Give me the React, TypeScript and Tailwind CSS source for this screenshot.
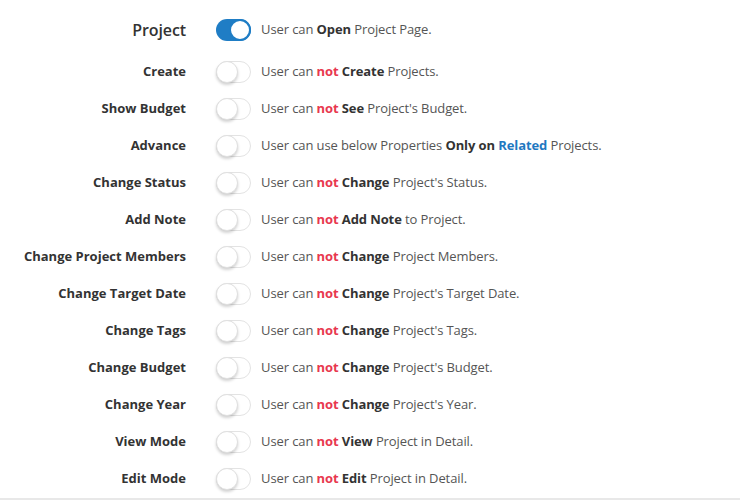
import React from "react";

type Part = { t: string; k?: "b" | "r" | "l" };
type Row = { label: string; on?: boolean; parts: Part[] };

const rows: Row[] = [
  { label: "Create", parts: [{ t: "User can " }, { t: "not", k: "r" }, { t: " " }, { t: "Create", k: "b" }, { t: " Projects." }] },
  { label: "Show Budget", parts: [{ t: "User can " }, { t: "not", k: "r" }, { t: " " }, { t: "See", k: "b" }, { t: " Project's Budget." }] },
  { label: "Advance", parts: [{ t: "User can use below Properties " }, { t: "Only on", k: "b" }, { t: " " }, { t: "Related", k: "l" }, { t: " Projects." }] },
  { label: "Change Status", parts: [{ t: "User can " }, { t: "not", k: "r" }, { t: " " }, { t: "Change", k: "b" }, { t: " Project's Status." }] },
  { label: "Add Note", parts: [{ t: "User can " }, { t: "not", k: "r" }, { t: " " }, { t: "Add Note", k: "b" }, { t: " to Project." }] },
  { label: "Change Project Members", parts: [{ t: "User can " }, { t: "not", k: "r" }, { t: " " }, { t: "Change", k: "b" }, { t: " Project Members." }] },
  { label: "Change Target Date", parts: [{ t: "User can " }, { t: "not", k: "r" }, { t: " " }, { t: "Change", k: "b" }, { t: " Project's Target Date." }] },
  { label: "Change Tags", parts: [{ t: "User can " }, { t: "not", k: "r" }, { t: " " }, { t: "Change", k: "b" }, { t: " Project's Tags." }] },
  { label: "Change Budget", parts: [{ t: "User can " }, { t: "not", k: "r" }, { t: " " }, { t: "Change", k: "b" }, { t: " Project's Budget." }] },
  { label: "Change Year", parts: [{ t: "User can " }, { t: "not", k: "r" }, { t: " " }, { t: "Change", k: "b" }, { t: " Project's Year." }] },
  { label: "View Mode", parts: [{ t: "User can " }, { t: "not", k: "r" }, { t: " " }, { t: "View", k: "b" }, { t: " Project in Detail." }] },
  { label: "Edit Mode", parts: [{ t: "User can " }, { t: "not", k: "r" }, { t: " " }, { t: "Edit", k: "b" }, { t: " Project in Detail." }] },
];

function Toggle({ on }: { on?: boolean }) {
  if (on) {
    return (
      <div className="relative w-[35px] h-[22px] rounded-full bg-[#1f7dc5] shrink-0">
        <div className="absolute right-0 top-0 w-[22px] h-[22px] rounded-full bg-white border-2 border-[#1f7dc5]" />
      </div>
    );
  }
  return (
    <div className="relative w-[35px] h-[22px] rounded-full bg-white border border-[#e3e3e3] shrink-0">
      <div className="absolute left-[-1px] top-[-1px] w-[22px] h-[22px] rounded-full bg-white border border-[#e0e0e0] shadow-[0_2px_3px_rgba(0,0,0,0.18)]" />
    </div>
  );
}

function Desc({ parts }: { parts: Part[] }) {
  return (
    <div className="whitespace-pre text-[13px] tracking-[-0.1px] text-[#555555]">
      {parts.map((p, i) => (
        <span
          key={i}
          className={
            p.k === "b"
              ? "font-bold text-[#333333]"
              : p.k === "r"
              ? "font-bold text-[#e8384f]"
              : p.k === "l"
              ? "font-bold text-[#1f78c1]"
              : ""
          }
        >
          {p.t}
        </span>
      ))}
    </div>
  );
}

export default function App() {
  return (
    <div
      className="w-[740px] h-[500px] bg-white overflow-hidden"
      style={{ fontFamily: '"Open Sans", "Liberation Sans", sans-serif' }}
    >
      <div className="pt-[8px]">
        <div className="flex items-center h-[44px]">
          <div className="w-[186px] text-right text-[16px] text-[#333333] font-semibold tracking-[-0.1px]">Project</div>
          <div className="ml-[30px]">
            <Toggle on />
          </div>
          <div className="ml-[10px]">
            <Desc parts={[{ t: "User can " }, { t: "Open", k: "b" }, { t: " Project Page." }]} />
          </div>
        </div>
        <div className="pt-[1px]">
          {rows.map((r) => (
            <div key={r.label} className="flex items-center h-[37px]">
              <div className="w-[186px] text-right text-[13px] font-bold text-[#333333] whitespace-nowrap">{r.label}</div>
              <div className="ml-[30px]">
                <Toggle on={r.on} />
              </div>
              <div className="ml-[10px]">
                <Desc parts={r.parts} />
              </div>
            </div>
          ))}
        </div>
      </div>
      <div className="mt-[1px] h-[2px] bg-[#e8e8e8]" />
    </div>
  );
}
